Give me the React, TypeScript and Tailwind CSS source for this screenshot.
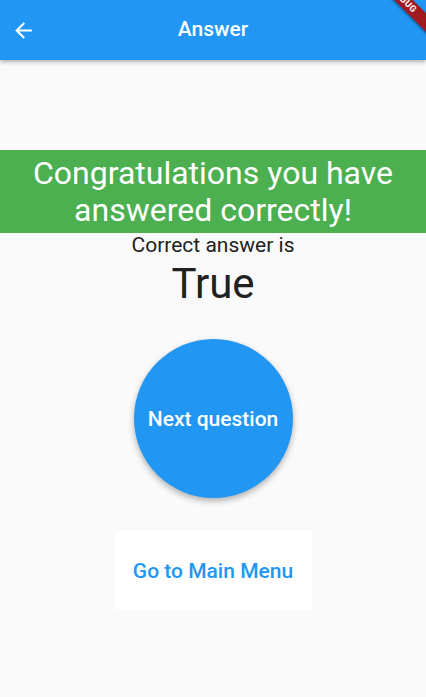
import React from "react";

const ArrowBack = () => (
  <svg width="25" height="25" viewBox="0 0 24 24" fill="white">
    <path d="M20 11H7.83l5.59-5.59L12 4l-8 8 8 8 1.41-1.41L7.83 13H20v-2z" />
  </svg>
);

const App = () => {
  return (
    <div
      className="relative w-[426px] h-[697px] overflow-hidden bg-[#fafafa]"
      style={{ fontFamily: "Roboto, 'Noto Sans', sans-serif" }}
    >
      {/* app bar */}
      <header className="relative z-10 h-[60px] bg-[#2196f3] flex items-center shadow-[0_2px_4px_rgba(0,0,0,0.3)]">
        <div className="w-[58px] pl-[11px] flex items-center">
          <button className="w-[25px] h-[25px] flex items-center justify-center">
            <ArrowBack />
          </button>
        </div>
        <h1 className="flex-1 text-center text-white text-[21px] font-medium">
          Answer
        </h1>
        <div className="w-[58px]" />
      </header>

      <main className="flex flex-col items-center pt-[90px]">
        <div className="w-full h-[83px] bg-[#4caf50] flex items-center justify-center">
          <p className="text-white text-[32px] leading-[37px] text-center">
            Congratulations you have
            <br />
            answered correctly!
          </p>
        </div>
        <p className="text-[#212121] text-[21px] leading-[25px]">
          Correct answer is
        </p>
        <p className="text-[#212121] text-[42px] leading-[50px] mt-[1px]">True</p>

        <button className="mt-[30px] w-[159px] h-[159px] rounded-full bg-[#2196f3] text-white text-[21px] font-medium pt-[3px] shadow-[0_3px_6px_rgba(0,0,0,0.3)]">
          Next question
        </button>

        <button className="mt-[33px] w-[197px] h-[79px] bg-white text-[#2196f3] text-[21px] font-medium pt-[3px]">
          Go to Main Menu
        </button>
      </main>

      {/* debug banner */}
      <div className="absolute z-20 left-[364px] top-[-6px] w-[80px] h-[13px] rotate-45 bg-[#a11a1f] flex items-center justify-center shadow-[0_1px_3px_rgba(0,0,0,0.5)]">
        <span className="text-white text-[9px] font-bold leading-none tracking-[0.5px]">
          DEBUG
        </span>
      </div>
    </div>
  );
};

export default App;
